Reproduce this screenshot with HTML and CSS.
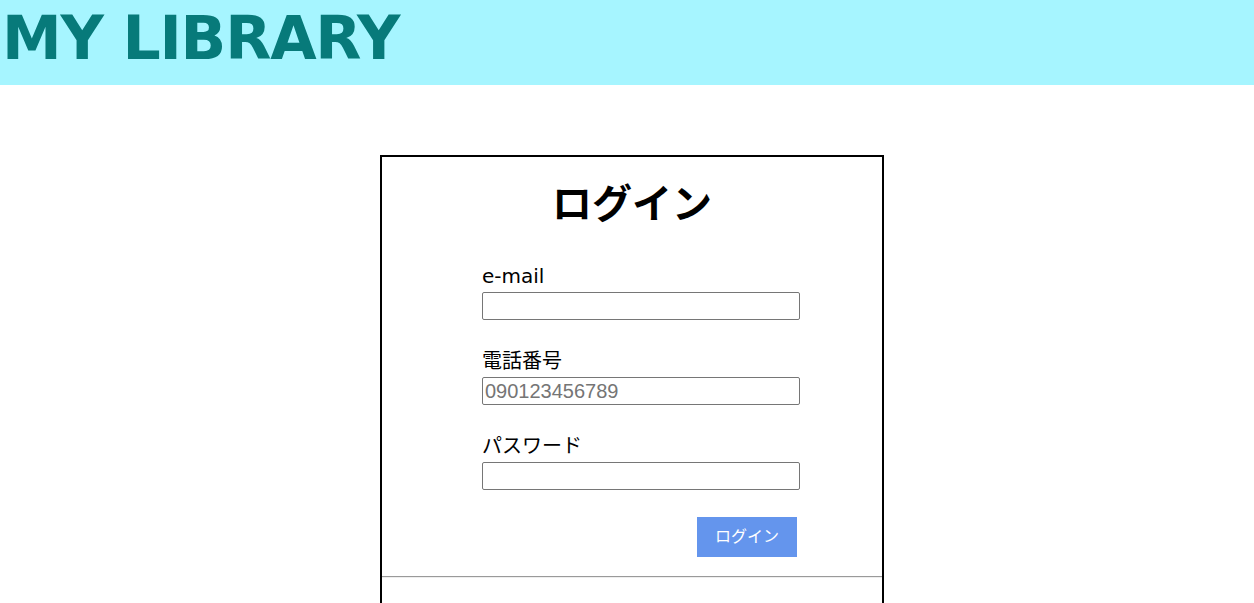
FILE: index.html
```html
<!DOCTYPE html>
<html lang="ja">
<head>
<meta charset="utf-8">
<title>MY LIBRARY - ログイン</title>
<link rel="stylesheet" href="styles.css">
</head>
<body>
<header class="site-header">
  <h1 class="site-title">MY LIBRARY</h1>
</header>
<main class="page">
  <section class="login-card">
    <h2 class="login-title">ログイン</h2>
    <form class="login-form">
      <div class="field">
        <label class="field-label" for="email">e-mail</label>
        <input class="field-input" id="email" type="email">
      </div>
      <div class="field">
        <label class="field-label" for="tel">電話番号</label>
        <input class="field-input" id="tel" type="tel" placeholder="090123456789">
      </div>
      <div class="field">
        <label class="field-label" for="password">パスワード</label>
        <input class="field-input" id="password" type="password">
      </div>
      <div class="actions">
        <button class="login-button" type="button">ログイン</button>
      </div>
    </form>
    <hr class="divider">
    <div class="card-footer"></div>
  </section>
</main>
</body>
</html>
```

FILE: styles.css
```css
html, body {
  margin: 0;
  padding: 0;
  background: #ffffff;
}

body {
  font-family: "DejaVu Sans", "Noto Sans CJK JP", sans-serif;
  color: #000;
}

.site-header {
  background: #a6f5ff;
  height: 85px;
}

.site-title {
  margin: 0;
  padding-left: 2px;
  font-family: "DejaVu Sans", sans-serif;
  font-weight: bold;
  font-size: 60px;
  line-height: 76px;
  color: #077a7a;
  letter-spacing: -1.2px;
}

.page {
  display: flex;
  justify-content: center;
  padding-top: 70px;
  padding-left: 10px;
}

.login-card {
  width: 500px;
  border: 2px solid #000;
  min-height: 480px;
}

.login-title {
  margin: 19px 0 0;
  text-align: center;
  font-family: "Noto Sans CJK JP", sans-serif;
  font-weight: bold;
  font-size: 40px;
  line-height: 50px;
}

.login-form {
  width: 318px;
  margin: 38px 0 0 100px;
}

.field {
  display: flex;
  flex-direction: column;
  margin-bottom: 29px;
}

.field-label {
  font-family: "DejaVu Sans", "Noto Sans CJK JP", sans-serif;
  font-size: 20px;
  line-height: 24px;
  margin-bottom: 4px;
}

.field-input {
  box-sizing: border-box;
  width: 318px;
  height: 28px;
  margin: 0;
  padding: 1px 2px;
  border: 1px solid #767676;
  border-radius: 2px;
  font-family: "Liberation Sans", Arial, sans-serif;
  font-size: 20px;
}

.field-input::placeholder {
  color: #757575;
}

.actions {
  display: flex;
  justify-content: flex-end;
  padding-right: 3px;
  margin-top: -2px;
}

.login-button {
  width: 100px;
  height: 40px;
  padding: 0 0 5px;
  border: none;
  background: #6495ed;
  color: #fff;
  font-family: "Noto Sans CJK JP", sans-serif;
  font-size: 16px;
}

.divider {
  margin: 19px 0 0;
  border: none;
  border-top: 1px solid #9a9a9a;
  border-bottom: 1px solid #eeeeee;
}
```
